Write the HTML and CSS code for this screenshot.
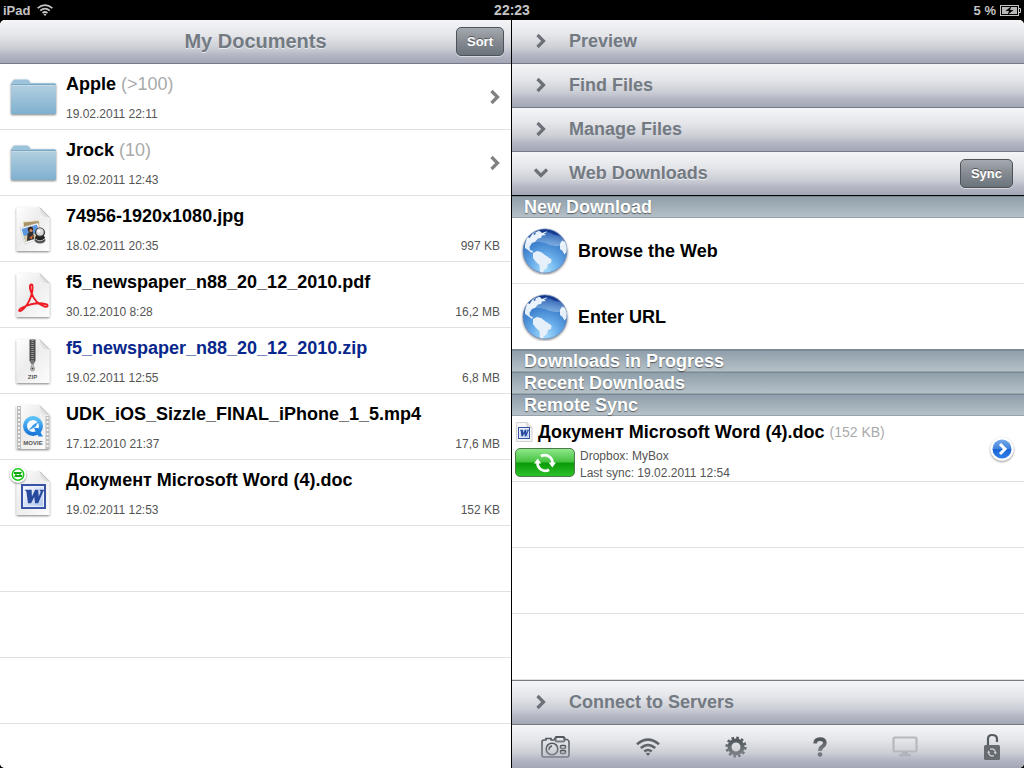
FILE: index.html
```html
<!DOCTYPE html>
<html lang="en">
<head>
<meta charset="utf-8">
<meta name="viewport" content="width=device-width, initial-scale=1">
<title>My Documents</title>
<link rel="stylesheet" href="styles.css">
</head>
<body>
<svg class="sprite" width="0" height="0" aria-hidden="true">
  <defs>
    <linearGradient id="g-folder" x1="0" y1="0" x2="0" y2="1"><stop offset="0" stop-color="#b2cfe0"/><stop offset="1" stop-color="#7fb0cf"/></linearGradient>
    <linearGradient id="g-page" x1="0" y1="0" x2="1" y2="1"><stop offset="0" stop-color="#ffffff"/><stop offset=".45" stop-color="#ececec"/><stop offset="1" stop-color="#fdfdfd"/></linearGradient>
    <linearGradient id="g-fold" x1="0" y1="1" x2="1" y2="0"><stop offset="0" stop-color="#ffffff"/><stop offset=".6" stop-color="#cfcfcf"/><stop offset="1" stop-color="#b5b5b5"/></linearGradient>
    <linearGradient id="g-q" x1="0" y1="0" x2="0" y2="1"><stop offset="0" stop-color="#5cc0f7"/><stop offset="1" stop-color="#1a77d8"/></linearGradient>
    <linearGradient id="g-word" x1="0" y1="0" x2="1" y2="1"><stop offset="0" stop-color="#ffffff"/><stop offset="1" stop-color="#a9c0ea"/></linearGradient>
    <linearGradient id="g-ink" x1="0" y1="0" x2="0" y2="1"><stop offset="0" stop-color="#50575d"/><stop offset="1" stop-color="#7b8087"/></linearGradient>
    <linearGradient id="g-disc" x1="0" y1="0" x2="0" y2="1"><stop offset="0" stop-color="#74a7ea"/><stop offset=".48" stop-color="#4485dd"/><stop offset=".52" stop-color="#1c66d4"/><stop offset="1" stop-color="#2f80ea"/></linearGradient>
    <radialGradient id="g-globe" cx=".5" cy=".92" r=".95"><stop offset="0" stop-color="#a5dcfb"/><stop offset=".35" stop-color="#67acea"/><stop offset=".7" stop-color="#3a7cc9"/><stop offset="1" stop-color="#123f9c"/></radialGradient>
    <linearGradient id="g-gloss" x1="0" y1="0" x2="0" y2="1"><stop offset="0" stop-color="#ffffff" stop-opacity=".05"/><stop offset="1" stop-color="#ffffff" stop-opacity=".3"/></linearGradient>
    <filter id="f-shadow" x="-20%" y="-20%" width="140%" height="150%"><feDropShadow dx="0" dy="1" stdDeviation="1" flood-color="#000" flood-opacity=".5"/></filter>
  </defs>

  <symbol id="i-folder" viewBox="0 0 66 65">
    <g filter="url(#f-shadow)">
      <path d="M11 23V19.500Q11 18.500 12 18.500L13 16.500Q13.500 15.500 15 15.500H27Q28 15.500 28.500 16L30.500 19H54.500Q56 19 56 20.500V48.500Q56 50 54.500 50H12.500Q11 50 11 48.500Z" fill="#9cc3d9"/>
      <path d="M11 21H56V48.500Q56 50 54.500 50H12.500Q11 50 11 48.500Z" fill="url(#g-folder)"/>
    </g>
    <path d="M11.500 20.500H55.500" stroke="#7fa9c3"/><path d="M12 21.500H55" stroke="#c3dbe8"/>
  </symbol>
  <symbol id="i-page" viewBox="0 0 66 65">
    <path d="M17.500 11.500H39.500L49.500 21.500V54Q49.500 55 48.500 55H17.500Q16.500 55 16.500 54V12.500Q16.500 11.500 17.500 11.500Z" fill="url(#g-page)" filter="url(#f-shadow)"/>
    <path d="M39.500 11.500C41 15 41 18 40 22C43.500 20.500 46.500 20.800 49.500 21.500Z" fill="url(#g-fold)"/>
    <path d="M39.500 11.500L49.500 21.500" stroke="#b9b9b9" stroke-width=".7"/>
  </symbol>
  <symbol id="i-word" viewBox="0 0 24 24">
    <rect x="1" y="1" width="22" height="22" fill="url(#g-word)" stroke="#3853a6" stroke-width="2"/>
    <rect x="2.500" y="2.500" width="19" height="19" fill="none" stroke="#e9f0fc"/>
    <path d="M3.500 5.500H10.200L10.500 12L13.500 5.500H16.500L17 12L19 7.500L17.500 5.500H22.500L21 8L16.500 18.500H13.500L12.700 12.500L9.700 18.500H6.700L5.200 7.500Z" fill="#284a9e"/>
  </symbol>
  <symbol id="i-sync" viewBox="0 0 24 24">
    <path d="M7.500 4.700A8.500 8.500 0 0 1 20.200 12.500M16.500 19.300A8.500 8.500 0 0 1 3.800 11.500" fill="none" stroke="currentColor" stroke-width="3"/>
    <path d="M16 11.500H24L20 17ZM0 12.500H8L4 7Z" fill="currentColor"/>
  </symbol>
  <symbol id="i-wifi" viewBox="0 0 24 18">
    <g fill="none" stroke="currentColor" stroke-width="2.600"><path d="M1 6.300Q12-3 23 6.300"/><path d="M4.800 10Q12 4 19.200 10"/><path d="M8.300 13.500Q12 10.500 15.700 13.500"/></g><path d="M9.800 15.600Q12 14 14.200 15.600L12 18Z" fill="currentColor"/>
  </symbol>
  <symbol id="i-chevron" viewBox="0 0 12 16"><path d="M2.500 2L8.500 8L2.500 14" fill="none" stroke="currentColor" stroke-width="3.200"/></symbol>
  <symbol id="i-globe" viewBox="0 0 48 48">
    <circle cx="24" cy="24" r="22" fill="url(#g-globe)" stroke="#6e87b0" stroke-width=".8" filter="url(#f-shadow)"/>
    <g fill="#e6f0fb">
      <path d="M4 18L6 11L10 9L12 6L18 4L26 3L27 4.500L23 6.500L25 8L21 8.500L20 11L17 11.500L14 15L11 16L8.500 20L9 23L12 24L11 26L7 23L4 21Z"/>
      <path d="M12 26L16 24L20 25L24 28L30.500 32.500L30 36L27 37L26 41L23 43L22 45.500L19 45L18.500 38L15 35L12 31Z"/>
      <path d="M39 17L41 13.500L44 15L45.700 20L45.500 25L43.500 27.500L41.500 24L39 22Z"/>
    </g>
    <path d="M3.500 17Q8 4 24 3Q40 4 44.500 17Q35 22 24 16Q12 13 3.500 17Z" fill="url(#g-gloss)"/>
    <path d="M18 3.200Q26 1 34 5L39 9L33 7.500L29 5.500L25 4.500L21 6Z" fill="#14388c"/>
    <path d="M7 10L10 7.500L9 11ZM12 7L15 5L14 8Z" fill="#2b5aa8"/>
  </symbol>
</svg>

<div class="screen">
  <header class="status">
    <span class="status-left">iPad <svg class="status-wifi" role="img" aria-label="Wi-Fi"><use href="#i-wifi"/></svg></span>
    <time class="status-time">22:23</time>
    <span class="status-right">5 %
      <svg width="21" height="11" viewBox="0 0 21 11" role="img" aria-label="Charging"><rect x=".5" y=".5" width="18" height="10" fill="none" stroke="#c4c4c4"/><rect x="2" y="2" width="15" height="7" fill="#b8b8b8"/><path d="M19 3.500H20.500V7.500H19" fill="none" stroke="#c4c4c4"/><path d="M11.500 1L5.500 6H9L7.500 10L13.500 5H10Z" fill="#000"/></svg>
    </span>
  </header>

  <main class="panels">
    <section class="panel panel-files">
      <div class="bar title-bar">
        <h1 class="title">My Documents</h1>
        <button class="tool-button" type="button">Sort</button>
      </div>
      <ul class="list">
        <li><a class="file" href="#apple">
          <svg class="file-icon" aria-hidden="true"><use href="#i-folder"/></svg>
          <span class="file-text"><span class="file-name">Apple <span class="count">(&gt;100)</span></span><span class="file-date">19.02.2011 22:11</span></span>
          <svg class="chevron" aria-hidden="true"><use href="#i-chevron"/></svg></a></li>
        <li><a class="file" href="#jrock">
          <svg class="file-icon" aria-hidden="true"><use href="#i-folder"/></svg>
          <span class="file-text"><span class="file-name">Jrock <span class="count">(10)</span></span><span class="file-date">19.02.2011 12:43</span></span>
          <svg class="chevron" aria-hidden="true"><use href="#i-chevron"/></svg></a></li>
        <li><a class="file" href="#jpg">
          <svg class="file-icon" viewBox="0 0 66 65" aria-hidden="true"><use href="#i-page"/>
            <path d="M23 26L39 24.500L41 40L25 42Z" fill="#a89468" stroke="#eee6cf"/>
            <path d="M20 32L38 27L42 42L25 48Z" fill="#fff" stroke="#bbb" stroke-width=".5"/>
            <path d="M21.500 33L37 28.500L40.500 41L25.500 46Z" fill="#5f97dc"/>
            <path d="M23.700 40L39.200 36.500L40.500 41L25.500 46Z" fill="#d9c9a4"/>
            <path d="M27 45L27.500 38L30 35L33 35.500L34 43Z" fill="#33302f"/><circle cx="30.500" cy="33.500" r="2.700" fill="#41271c"/><circle cx="31" cy="34.500" r="1.600" fill="#c98a63"/>
            <path d="M29 42L33 39L32 43Z" fill="#d6693d"/>
            <ellipse cx="40" cy="44" rx="5.500" ry="3.500" fill="#555"/><ellipse cx="40" cy="42" rx="5" ry="3.500" fill="#222"/>
            <circle cx="40" cy="36.500" r="5" fill="#343434"/><circle cx="40" cy="36" r="3.800" fill="#d8d8d8"/><circle cx="39" cy="35" r="1.600" fill="#fff"/>
            <path d="M35.500 43Q40 47 45 42.500" fill="none" stroke="#ccc"/></svg>
          <span class="file-text"><span class="file-name">74956-1920x1080.jpg</span><span class="file-date">18.02.2011 20:35</span></span>
          <span class="file-size">997 KB</span></a></li>
        <li><a class="file" href="#pdf">
          <svg class="file-icon" viewBox="0 0 66 65" aria-hidden="true"><use href="#i-page"/>
            <path d="M31.500 22.500C29.500 22.500 29.500 26 31 30C33.500 37 38 42.500 44.500 44.500C48.500 45.500 48.500 42.500 45 42C39 40.500 30 42 22.500 45.500C18 47.500 18.500 50.500 21.500 48.500C27 44.500 33 34 32.500 24.500C32.500 23 32.200 22.500 31.500 22.500Z" fill="none" stroke="#ed1c24" stroke-width="1.900"/></svg>
          <span class="file-text"><span class="file-name">f5_newspaper_n88_20_12_2010.pdf</span><span class="file-date">30.12.2010 8:28</span></span>
          <span class="file-size">16,2 MB</span></a></li>
        <li><a class="file" href="#zip">
          <svg class="file-icon" viewBox="0 0 66 65" aria-hidden="true"><use href="#i-page"/>
            <path d="M29.500 11.500H35.500V33L32.500 35.500L29.500 33Z" fill="#4c4c4c"/><path d="M32.500 12V33" stroke="#999" stroke-width="2.500" stroke-dasharray="1 1"/>
            <circle cx="32.500" cy="34" r="2.200" fill="#777"/><path d="M32.500 35L34.500 41Q34.500 43 32.500 43Q30.500 43 30.500 41Z" fill="#d5d5d5" stroke="#777" stroke-width=".7"/><circle cx="32.500" cy="40.500" r="1" fill="#444"/>
            <text class="page-label" x="32.500" y="51" text-anchor="middle">ZIP</text></svg>
          <span class="file-text"><span class="file-name highlight">f5_newspaper_n88_20_12_2010.zip</span><span class="file-date">19.02.2011 12:55</span></span>
          <span class="file-size">6,8 MB</span></a></li>
        <li><a class="file" href="#mp4">
          <svg class="file-icon" viewBox="0 0 66 65" aria-hidden="true"><use href="#i-page"/>
            <path d="M17 12H21V55H17ZM45.500 22H49.500V55H45.500Z" fill="#bcbcbc"/>
            <path d="M19 13V54M47.500 23V54" stroke="#f3f3f3" stroke-width="2" stroke-dasharray="2 2"/>
            <circle cx="33" cy="32" r="8" fill="#f4faff" stroke="url(#g-q)" stroke-width="4"/>
            <path d="M34 34H38L43 42.500H38.500Z" fill="#2384df"/>
            <path d="M28.500 36.500L33 31L38.500 27.500L35.500 33Z" fill="#3d9ce9"/>
            <text class="page-label" x="33" y="51" text-anchor="middle">MOVIE</text></svg>
          <span class="file-text"><span class="file-name">UDK_iOS_Sizzle_FINAL_iPhone_1_5.mp4</span><span class="file-date">17.12.2010 21:37</span></span>
          <span class="file-size">17,6 MB</span></a></li>
        <li><a class="file" href="#doc">
          <svg class="file-icon" viewBox="0 0 66 65" aria-hidden="true"><use href="#i-page"/><use href="#i-word" x="21" y="24" width="25" height="25"/>
            <circle cx="18" cy="14.500" r="8" fill="#fff" filter="url(#f-shadow)"/><circle cx="18" cy="14.500" r="5.700" fill="none" stroke="#18c818" stroke-width="1.600"/><path d="M14 13H19.500M16.500 16H22" fill="none" stroke="#12a912" stroke-width="1.800"/><path d="M18 12H22L20 15.500ZM14 17H18L16 13.500Z" fill="#12a912"/></svg>
          <span class="file-text"><span class="file-name">Документ Microsoft Word (4).doc</span><span class="file-date">19.02.2011 12:53</span></span>
          <span class="file-size">152 KB</span></a></li>
      </ul>
    </section>

    <section class="panel panel-tools">
      <button class="bar accordion" type="button"><svg class="chevron" aria-hidden="true"><use href="#i-chevron"/></svg>Preview</button>
      <button class="bar accordion" type="button"><svg class="chevron" aria-hidden="true"><use href="#i-chevron"/></svg>Find Files</button>
      <button class="bar accordion" type="button"><svg class="chevron" aria-hidden="true"><use href="#i-chevron"/></svg>Manage Files</button>
      <div class="bar bar-open">
        <button class="accordion" type="button" aria-expanded="true"><svg class="chevron chevron-down" aria-hidden="true"><use href="#i-chevron"/></svg>Web Downloads</button>
        <button class="tool-button sync-button" type="button">Sync</button>
      </div>
      <div class="list downloads">
        <h2 class="section">New Download</h2>
        <a class="action" href="#browse"><svg class="globe" aria-hidden="true"><use href="#i-globe"/></svg>Browse the Web</a>
        <a class="action action-last" href="#url"><svg class="globe" aria-hidden="true"><use href="#i-globe"/></svg>Enter URL</a>
        <h2 class="section">Downloads in Progress</h2>
        <h2 class="section">Recent Downloads</h2>
        <h2 class="section">Remote Sync</h2>
        <div class="remote">
          <div class="remote-main">
            <div class="remote-head">
              <svg class="mini-doc" viewBox="0 0 18 20" aria-hidden="true"><path d="M1.500 .5H12L17 5.500V19.500H1.500Z" fill="#f7f7f7" stroke="#d2d2d2"/><path d="M12 .5V5.500H17" fill="#e3e3e3" stroke="#cfcfcf"/><use href="#i-word" x="3" y="5" width="12" height="12"/></svg>
              <span class="remote-name">Документ Microsoft Word (4).doc</span>
              <span class="remote-size">(152 KB)</span>
            </div>
            <div class="remote-body">
              <button class="green-button" type="button" aria-label="Sync now"><svg width="22" height="22" aria-hidden="true"><use href="#i-sync"/></svg></button>
              <div class="remote-info"><span>Dropbox: MyBox</span><span>Last sync: 19.02.2011 12:54</span></div>
            </div>
          </div>
          <button class="plain-button" type="button" aria-label="Details"><svg width="30" height="30" viewBox="0 0 30 30" aria-hidden="true"><circle cx="15" cy="15" r="11.500" fill="#fff" filter="url(#f-shadow)"/><circle cx="15" cy="15" r="9.500" fill="url(#g-disc)"/><path d="M13 10L18 15L13 20" fill="none" stroke="#fff" stroke-width="3"/></svg></button>
        </div>
      </div>
      <button class="bar bar-bottom accordion" type="button"><svg class="chevron" aria-hidden="true"><use href="#i-chevron"/></svg>Connect to Servers</button>
      <nav class="bar bar-bottom toolbar" aria-label="Tools">
        <button class="plain-button" type="button" aria-label="Camera"><svg width="29" height="22" viewBox="0 0 29 22"><g fill="none" stroke="url(#g-ink)" stroke-width="1.600"><path d="M3 4H5V2.500H10V4H13L15 1H22L24 3.500H26Q28 4 28 6V19Q28 21 26 21H3Q1 21 1 19V6Q1 4 3 4Z"/><circle cx="11" cy="13" r="5.800"/><path d="M8 14Q8 10.500 11 10"/><rect x="14.500" y="1" width="9" height="4.500" rx="1.500" stroke-width="2"/><rect x="19.500" y="9.500" width="5" height="3" rx="1"/><rect x="19.500" y="14.500" width="5" height="3" rx="1"/></g></svg></button>
        <button class="plain-button" type="button" aria-label="Wi-Fi"><svg class="tool-wifi" width="24" height="18"><use href="#i-wifi"/></svg></button>
        <button class="plain-button" type="button" aria-label="Settings"><svg width="22" height="22" viewBox="0 0 22 22" fill="none"><circle cx="11" cy="11" r="6.500" stroke="url(#g-ink)" stroke-width="4"/><circle cx="11" cy="11" r="9.300" stroke="url(#g-ink)" stroke-width="2.600" stroke-dasharray="2.600 2.270"/></svg></button>
        <button class="plain-button" type="button" aria-label="Help"><svg width="14" height="20" viewBox="0 0 14 20"><path d="M2.200 6.500Q2.200 2.200 7 2.200Q11.800 2.200 11.800 6Q11.800 8 9.500 9.500Q7 11 7 14" fill="none" stroke="url(#g-ink)" stroke-width="3.800"/><circle cx="7" cy="17.500" r="2.300" fill="#72777e"/></svg></button>
        <button class="plain-button" type="button" aria-label="Display" disabled><svg width="26" height="21" viewBox="0 0 26 21"><rect x="1.500" y="1.500" width="23" height="14" rx="1.500" fill="none" stroke="#b5b8bd" stroke-width="2.200"/><path d="M10 16H16V18H19V20.500H7V18H10Z" fill="#b0b3b9"/></svg></button>
        <button class="plain-button" type="button" aria-label="Unlock"><svg class="lock" width="16" height="28" viewBox="0 0 16 28"><path d="M4 13V6Q4 2 8 2Q13 2 13 6V9" fill="none" stroke="#555c62" stroke-width="2.200"/><rect x="0" y="12" width="16" height="15" rx="1.500" fill="#666b72"/><use href="#i-sync" x="3" y="14.500" width="10" height="10"/></svg></button>
      </nav>
    </section>
  </main>
</div>
</body>
</html>
```

FILE: styles.css
```css
* { box-sizing: border-box; }

body {
  margin: 0;
  background: #000;
  color: #000;
  font-family: "Liberation Sans", Arial, sans-serif;
}

button {
  margin: 0;
  padding: 0;
  border: 0;
  background: none;
  color: inherit;
  font: inherit;
}

a { color: inherit; text-decoration: none; }
svg { display: block; flex: none; }
.sprite { position: absolute; }

.screen { display: flex; flex-direction: column; min-height: 100vh; }

.status {
  display: grid;
  grid-template-columns: 1fr auto 1fr;
  align-items: center;
  height: 20px;
  padding: 0 3px;
  color: #c4c4c4;
  font-size: 13px;
  font-weight: bold;
}
.status-left, .status-right { display: flex; align-items: center; gap: 4px; }
.status-left { gap: 7px; }
.status-right { justify-content: flex-end; }
.status-time { font-size: 14px; }
.status-wifi { width: 16px; height: 12px; }

.panels {
  flex: 1;
  display: grid;
  grid-template-columns: 1fr 1fr;
  border-radius: 5px;
  overflow: hidden;
  background: #fff;
}
.panel { display: flex; flex-direction: column; min-width: 0; }
.panel-files { border-right: 1px solid #000; }

.bar {
  flex: none;
  height: 44px;
  border-bottom: 1px solid #767a88;
  background: linear-gradient(#f4f5f7, #e5e6ea 35%, #ccced6 65%, #b3b6c3 82%, #a3a7b5);
  color: #737a82;
  font-weight: bold;
  text-shadow: 0 1px 0 rgba(255, 255, 255, .6);
}
.bar-open { display: flex; align-items: center; border-bottom-color: #000; }
.bar-bottom { border-top: 1px solid #777a80; border-bottom: 0; }

.title-bar {
  display: grid;
  grid-template-columns: 1fr auto 1fr;
  align-items: center;
  padding: 0 7px;
}
.title { grid-column: 2; margin: 0; font-size: 20px; }

.tool-button {
  justify-self: end;
  height: 29px;
  padding: 0 10px;
  border: 1px solid #4f5357;
  border-radius: 5px;
  background: linear-gradient(#a5a9b0, #858a91 50%, #6b747b);
  box-shadow: 0 1px 0 rgba(255, 255, 255, .5);
  color: #fff;
  font-size: 13px;
  font-weight: bold;
  text-shadow: 0 -1px 0 rgba(0, 0, 0, .45);
}
.sync-button { margin-right: 11px; }

.accordion {
  display: flex;
  align-items: center;
  gap: 22px;
  width: 100%;
  padding: 0 0 1px 23px;
  font-size: 18px;
  font-weight: bold;
  text-align: left;
  text-shadow: inherit;
}
.bar-open .accordion { flex: 1; height: 100%; }

.chevron { width: 12px; height: 16px; color: #808080; }
.accordion .chevron { color: #6d7278; }
.chevron-down { transform: rotate(90deg); }

.list {
  flex: 1;
  margin: 0;
  padding: 0;
  list-style: none;
  background: repeating-linear-gradient(#fff 0 65px, #e0e0e0 65px 66px);
}

.file {
  display: flex;
  height: 66px;
  border-bottom: 1px solid #e0e0e0;
  background: #fff;
}
.file-icon { width: 66px; height: 65px; }
.file-text {
  flex: 1;
  display: flex;
  flex-direction: column;
  gap: 12px;
  min-width: 0;
  padding-top: 10px;
  white-space: nowrap;
}
.file-name { font-size: 18px; font-weight: bold; line-height: 20px; }
.highlight { color: #08278c; }
.count { color: #aaa; font-weight: normal; }
.file-date, .file-size { color: #555; font-size: 12px; line-height: 16px; }
.file-size { align-self: flex-end; padding: 0 11px 7px 0; }
.file .chevron { align-self: center; margin-right: 10px; }
.page-label { fill: #555; font-size: 6px; font-weight: bold; }

/* The four section heads (88px) shift the ruled rows by 22px. */
.downloads { background-position: 0 22px; background-size: 100% 66px; }

.section {
  height: 22px;
  margin: 0;
  padding-left: 12px;
  border-top: 1px solid #788a94;
  border-bottom: 1px solid #98a2aa;
  background: linear-gradient(#909fab, #b5c0c7);
  color: #fff;
  font-size: 18px;
  line-height: 20px;
  text-shadow: 0 1px 1px rgba(0, 0, 0, .5);
}

.action {
  display: flex;
  align-items: center;
  gap: 9px;
  height: 66px;
  padding: 1px 0 0 9px;
  border-bottom: 1px solid #e0e0e0;
  background: #fff;
  font-size: 18px;
  font-weight: bold;
}
.action-last { border-bottom-color: #788a94; }
.globe { width: 48px; height: 48px; overflow: visible; }

.remote {
  display: flex;
  align-items: center;
  height: 66px;
  padding-right: 7px;
  border-bottom: 1px solid #e0e0e0;
  background: #fff;
}
.remote-main { flex: 1; min-width: 0; padding-left: 3px; }
.remote-head { display: flex; align-items: center; gap: 5px; height: 32px; white-space: nowrap; }
.mini-doc { width: 18px; height: 20px; }
.remote-name { font-size: 18px; font-weight: bold; }
.remote-size { color: #aaa; font-size: 14px; }
.remote-body { display: flex; align-items: flex-start; gap: 5px; height: 33px; }
.remote-info { display: flex; flex-direction: column; color: #555; font-size: 12px; line-height: 17px; }

.green-button {
  display: flex;
  align-items: center;
  justify-content: center;
  width: 60px;
  height: 29px;
  border: 1px solid #4c7a4c;
  border-radius: 5px;
  background: linear-gradient(#8ee88a, #45c23f 48%, #0b9a08 52%, #2cc128);
  color: #fff;
}

.plain-button { display: block; }

.toolbar {
  display: flex;
  align-items: center;
  justify-content: space-between;
  padding: 0 24px 0 29px;
}
.tool-wifi { color: #5f656b; }
.lock { color: #d5d7db; }
```
